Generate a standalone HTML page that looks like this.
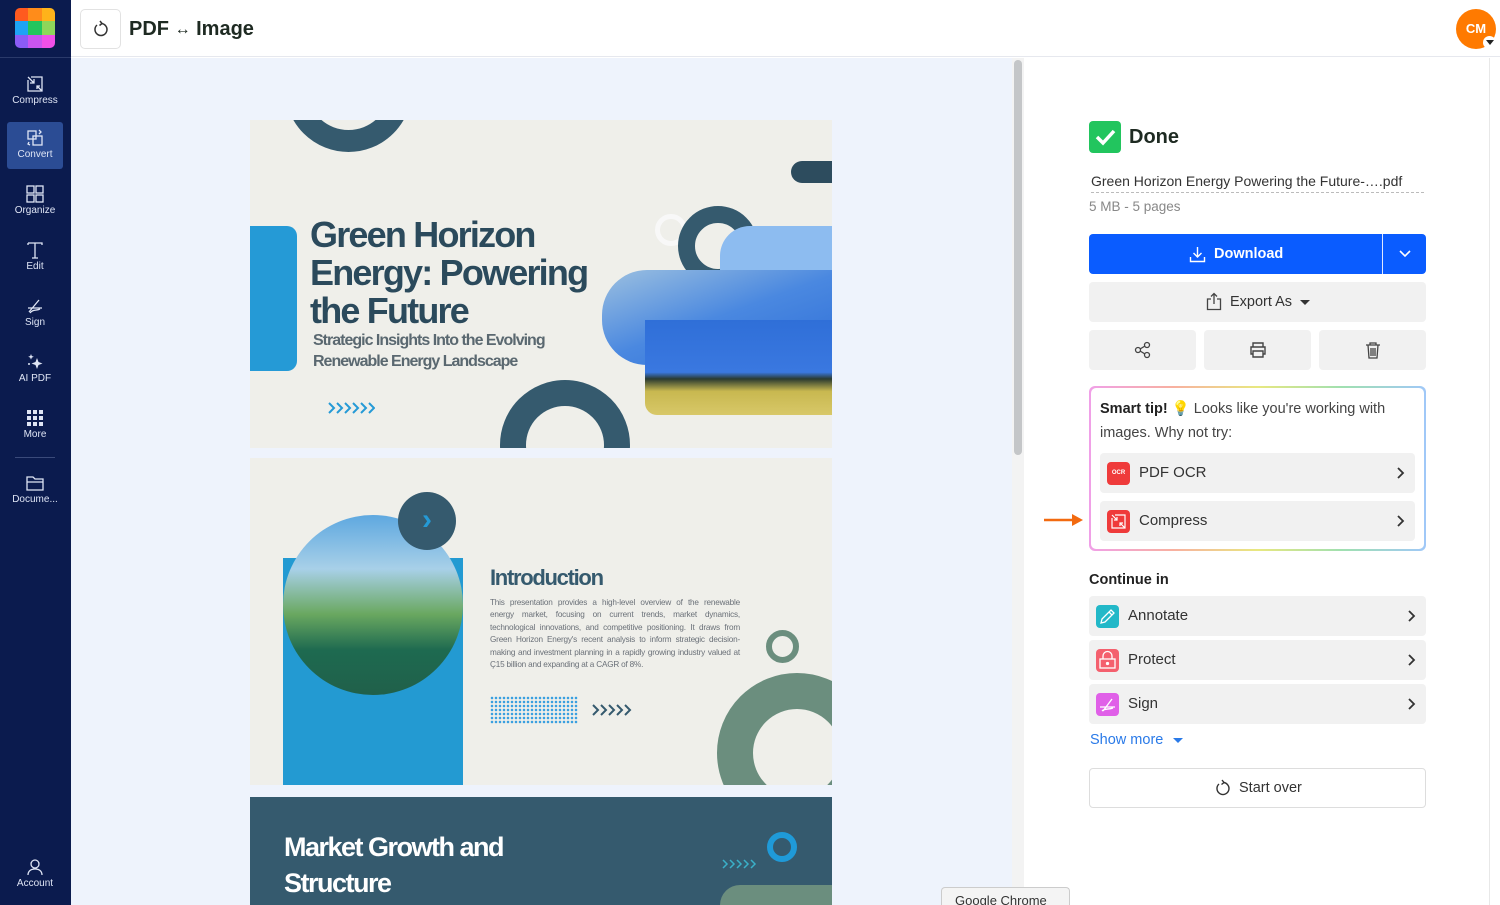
<!DOCTYPE html>
<html><head><meta charset="utf-8"><style>
*{box-sizing:border-box;margin:0;padding:0}
html,body{width:1500px;height:905px;overflow:hidden}
body{font-family:"Liberation Sans",sans-serif;background:#fff;position:relative}
.abs{position:absolute}
#side{left:0;top:0;width:71px;height:905px;background:#0b1b4e}
.nav{position:absolute;left:7px;width:56px;height:48px;color:#dfe5f5;font-size:10px;text-align:center}
.nav svg{display:block;margin:6px auto 1px}
#hdr{left:71px;top:0;width:1429px;height:57px;background:#fff;border-bottom:1px solid #e6e8ee}
#main{left:71px;top:58px;width:941px;height:847px;background:#eef3fc;overflow:hidden}
.slide{position:absolute;left:179px;width:582px;overflow:hidden;background:#efefea}
#rp{left:1024px;top:58px;width:466px;height:847px;background:#fff;border-right:1px solid #e8e8e8}
.btn{position:absolute;background:#f1f1f1;border-radius:4px}
.row{position:absolute;left:1089px;width:337px;height:40px;background:#f1f1f1;border-radius:4px;font-size:15px;color:#333}
.row .ic{position:absolute;left:7px;top:9px;width:23px;height:23px;border-radius:4px}
.row .t{position:absolute;left:39px;top:11px}
.row .ch{position:absolute;right:10px;top:13px}
</style></head><body>
<div id="side" class="abs">
 <div class="abs" style="left:15px;top:8px;width:40px;height:40px;border-radius:5px;overflow:hidden;display:grid;grid-template-columns:1fr 1fr 1fr">
  <div style="background:#ff5a1f"></div><div style="background:#ff8c1a"></div><div style="background:#ffb31a"></div>
  <div style="background:#1ea3f5"></div><div style="background:#22c55e"></div><div style="background:#8ed65a"></div>
  <div style="background:#8b5cf6"></div><div style="background:#c855f0"></div><div style="background:#f050e8"></div>
 </div>
 <div class="abs" style="left:0;top:57px;width:71px;height:1px;background:#2a3a6a"></div>
 <div class="nav" style="top:68px"><svg width="20" height="20" viewBox="0 0 20 20" fill="none" stroke="#dfe5f5" stroke-width="1.3"><path d="M6 3h11v14H3V6"/><path d="M3 3l6 6M9 5v4H5M17 17l-5-5M12 15v-3h3"/></svg>Compress</div>
 <div class="nav" style="top:122px;background:#2b4c94;border-radius:3px;height:47px"><svg width="20" height="20" viewBox="0 0 20 20" fill="none" stroke="#dfe5f5" stroke-width="1.3"><rect x="3" y="3" width="8" height="8"/><rect x="8" y="8" width="9" height="9"/><path d="M14 2l2 2-2 2M4 14l-1 2 2 1"/></svg>Convert</div>
 <div class="nav" style="top:178px"><svg width="20" height="20" viewBox="0 0 20 20" fill="none" stroke="#dfe5f5" stroke-width="1.3"><rect x="2" y="2" width="7" height="7"/><rect x="11" y="2" width="7" height="7"/><rect x="2" y="11" width="7" height="7"/><rect x="11" y="11" width="7" height="7"/></svg>Organize</div>
 <div class="nav" style="top:234px"><svg width="20" height="20" viewBox="0 0 20 20" fill="none" stroke="#dfe5f5" stroke-width="1.3"><path d="M3 3v2M3 3h14v2M10 3v15M7 18h6"/></svg>Edit</div>
 <div class="nav" style="top:290px"><svg width="20" height="20" viewBox="0 0 20 20" fill="none" stroke="#dfe5f5" stroke-width="1.3"><path d="M4 16l10-12M3 12h14M5 17c3-4 6-2 10-4"/></svg>Sign</div>
 <div class="nav" style="top:346px"><svg width="20" height="20" viewBox="0 0 20 20" fill="#dfe5f5"><path d="M12 6l1.5 4 4 1.5-4 1.5-1.5 4-1.5-4-4-1.5 4-1.5z"/><path d="M6 2l.8 2 2 .8-2 .8L6 7.6l-.8-2-2-.8 2-.8z"/><circle cx="4" cy="12" r="1"/></svg>AI PDF</div>
 <div class="nav" style="top:402px"><svg width="20" height="20" viewBox="0 0 20 20" fill="#dfe5f5"><rect x="2" y="2" width="4" height="4"/><rect x="8" y="2" width="4" height="4"/><rect x="14" y="2" width="4" height="4"/><rect x="2" y="8" width="4" height="4"/><rect x="8" y="8" width="4" height="4"/><rect x="14" y="8" width="4" height="4"/><rect x="2" y="14" width="4" height="4"/><rect x="8" y="14" width="4" height="4"/><rect x="14" y="14" width="4" height="4"/></svg>More</div>
 <div class="abs" style="left:15px;top:457px;width:40px;height:1px;background:#3a4a7a"></div>
 <div class="nav" style="top:467px"><svg width="20" height="20" viewBox="0 0 20 20" fill="none" stroke="#dfe5f5" stroke-width="1.3"><path d="M2 4h6l2 2h8v11H2zM2 9h16"/></svg>Docume...</div>
 <div class="nav" style="top:851px"><svg width="20" height="20" viewBox="0 0 20 20" fill="none" stroke="#dfe5f5" stroke-width="1.3"><circle cx="10" cy="7" r="4"/><path d="M3 18c0-4 3-6 7-6s7 2 7 6"/></svg>Account</div>
</div>
<div id="hdr" class="abs">
 <div class="abs" style="left:9px;top:9px;width:41px;height:40px;border:1px solid #e2e2e2;border-radius:5px"><svg class="abs" style="left:11px;top:10px" width="18" height="18" viewBox="0 0 18 18" fill="none" stroke="#333" stroke-width="1.5"><path d="M5 5a6 6 0 1 0 4-1.5"/><path d="M8 1l2 2.5-2.5 2"/></svg></div>
 <div class="abs" style="left:58px;top:18px;font-size:20px;font-weight:bold;color:#1e2a22">PDF <span style="font-size:16px;font-weight:normal;position:relative;top:-1px">↔</span> Image</div>
 <div class="abs" style="left:1385px;top:9px;width:40px;height:40px;border-radius:50%;background:#ff7a00;color:#fff;font-size:13px;font-weight:bold;text-align:center;line-height:40px">CM</div>
 <div class="abs" style="left:1412px;top:36px;width:13px;height:13px;border-radius:50%;background:#fff"></div>
 <div class="abs" style="left:1415px;top:40px;border-left:4px solid transparent;border-right:4px solid transparent;border-top:5px solid #222"></div>
</div>
<div id="main" class="abs">
 <div class="slide" style="top:62px;height:328px">
  <div class="abs" style="left:35px;top:-95px;width:127px;height:127px;border-radius:50%;border:22px solid #355a6e"></div>
  <div class="abs" style="left:541px;top:41px;width:60px;height:22px;border-radius:11px;background:#2d4c5e"></div>
  <div class="abs" style="left:0;top:106px;width:47px;height:145px;background:#259ad6;border-radius:0 10px 10px 0"></div>
  <div class="abs" style="left:60px;top:96px;font-size:36px;font-weight:bold;color:#2b4a5c;line-height:38px;letter-spacing:-1.8px">Green Horizon<br>Energy: Powering<br>the Future</div>
  <div class="abs" style="left:63px;top:210px;font-size:16px;font-weight:bold;color:#5a6870;line-height:21px;letter-spacing:-1px">Strategic Insights Into the Evolving<br>Renewable Energy Landscape</div>
  <svg class="abs" style="left:77px;top:281px" width="48" height="14" viewBox="0 0 48 14" fill="none" stroke="#259ad6" stroke-width="2"><path d="M2 2l5 5-5 5M10 2l5 5-5 5M18 2l5 5-5 5M26 2l5 5-5 5M34 2l5 5-5 5M42 2l5 5-5 5"/></svg>
  <div class="abs" style="left:405px;top:94px;width:32px;height:32px;border-radius:50%;border:5px solid #f8f8f8"></div>
  <div class="abs" style="left:428px;top:86px;width:80px;height:80px;border-radius:50%;border:17px solid #355a6e"></div>
  <div class="abs" style="left:250px;top:260px;width:130px;height:130px;border-radius:50%;border:26px solid #355a6e"></div>
  <div class="abs" style="left:470px;top:106px;width:112px;height:60px;background:#8dbcf0;border-radius:30px 0 0 0"></div>
  <div class="abs" style="left:352px;top:150px;width:230px;height:95px;background:linear-gradient(160deg,#9cc0e0 0%,#4a88e0 50%,#2f6fd8 100%);border-radius:45px 0 0 45px"></div>
  <div class="abs" style="left:395px;top:200px;width:187px;height:95px;background:linear-gradient(180deg,#2f6fd8 0%,#3a78e0 55%,#2a3a30 62%,#c8b850 75%,#d8c868 100%);border-radius:0 0 0 12px"></div>
 </div>
 <div class="slide" style="top:400px;height:327px">
  <div class="abs" style="left:33px;top:100px;width:180px;height:227px;background:#239ad2"></div>
  <div class="abs" style="left:33px;top:57px;width:180px;height:180px;border-radius:50%;background:linear-gradient(180deg,#5ea8e0 0%,#a8d0e8 30%,#6aa860 55%,#1e6a50 75%,#20604a 100%)"></div>
  <div class="abs" style="left:148px;top:34px;width:58px;height:58px;border-radius:50%;background:#355a6e;color:#259ad6;font-size:30px;font-weight:bold;text-align:center;line-height:56px">›</div>
  <div class="abs" style="left:240px;top:107px;font-size:22px;font-weight:bold;color:#355a6e;letter-spacing:-1.3px">Introduction</div>
  <div class="abs" style="left:240px;top:139px;width:250px;font-size:8.2px;line-height:12.4px;color:#6a7078;text-align:justify;letter-spacing:-0.2px">This presentation provides a high-level overview of the renewable energy market, focusing on current trends, market dynamics, technological innovations, and competitive positioning. It draws from Green Horizon Energy's recent analysis to inform strategic decision-making and investment planning in a rapidly growing industry valued at Ç15 billion and expanding at a CAGR of 8%.</div>
  <div class="abs" style="left:240px;top:238px;width:88px;height:28px;background-image:radial-gradient(circle,#3aa0e0 1.2px,transparent 1.4px);background-size:4px 4px"></div>
  <svg class="abs" style="left:341px;top:245px" width="48" height="14" viewBox="0 0 48 14" fill="none" stroke="#355a6e" stroke-width="2"><path d="M2 2l5 5-5 5M10 2l5 5-5 5M18 2l5 5-5 5M26 2l5 5-5 5M34 2l5 5-5 5"/></svg>
  <div class="abs" style="left:516px;top:172px;width:33px;height:33px;border-radius:50%;border:6px solid #6b8e7e"></div>
  <div class="abs" style="left:467px;top:215px;width:160px;height:160px;border-radius:50%;border:36px solid #6b8e7e"></div>
 </div>
 <div class="slide" style="top:739px;height:120px;background:#355a6e">
  <div class="abs" style="left:34px;top:32px;font-size:27px;font-weight:bold;color:#fff;line-height:36px;letter-spacing:-1.5px">Market Growth and<br>Structure</div>
  <div class="abs" style="left:517px;top:35px;width:30px;height:30px;border-radius:50%;border:6px solid #1f9ad8"></div>
  <svg class="abs" style="left:471px;top:61px" width="40" height="12" viewBox="0 0 40 12" fill="none" stroke="#3ab0c8" stroke-width="1.5"><path d="M2 2l4 4-4 4M9 2l4 4-4 4M16 2l4 4-4 4M23 2l4 4-4 4M30 2l4 4-4 4"/></svg>
  <div class="abs" style="left:470px;top:88px;width:140px;height:60px;border-radius:20px;background:#6b8e7e"></div>
 </div>
</div>
<div class="abs" style="left:1012px;top:58px;width:12px;height:847px;background:#f3f3f3"></div>
<div class="abs" style="left:1014px;top:60px;width:8px;height:395px;background:#c4c6c8;border-radius:4px"></div>
<div id="rp" class="abs"></div>
<div class="abs" style="left:1089px;top:121px;width:32px;height:32px;border-radius:4px;background:#22c55e"><svg width="32" height="32" viewBox="0 0 32 32"><path d="M8 16l6 6 11-12" fill="none" stroke="#fff" stroke-width="3.5"/></svg></div>
<div class="abs" style="left:1129px;top:126px;font-size:20px;font-weight:bold;color:#1e2a22">Done</div>
<div class="abs" style="left:1091px;top:173px;font-size:14px;color:#333;width:333px;border-bottom:1px dashed #bbb;padding-bottom:3px">Green Horizon Energy Powering the Future-….pdf</div>
<div class="abs" style="left:1089px;top:199px;font-size:13.5px;color:#888">5 MB - 5 pages</div>
<div class="abs" style="left:1089px;top:234px;width:337px;height:40px;background:#0a5cff;border-radius:4px"></div>
<div class="abs" style="left:1382px;top:234px;width:1px;height:40px;background:#e0e8ff"></div>
<svg class="abs" style="left:1189px;top:245px" width="17" height="18" viewBox="0 0 17 18" fill="none" stroke="#fff" stroke-width="1.4"><path d="M8.5 2v10M4.5 8l4 4 4-4M1.5 12v4.5h14V12"/></svg>
<div class="abs" style="left:1214px;top:246px;font-size:14.5px;font-weight:bold;color:#fff">Download</div>
<svg class="abs" style="left:1398px;top:249px" width="14" height="10" viewBox="0 0 14 10" fill="none" stroke="#fff" stroke-width="1.6"><path d="M2 2l5 5 5-5"/></svg>
<div class="btn" style="left:1089px;top:282px;width:337px;height:40px"></div>
<svg class="abs" style="left:1206px;top:292px" width="16" height="19" viewBox="0 0 16 19" fill="none" stroke="#444" stroke-width="1.3"><path d="M5 7H1.5v10.5h13V7H11M8 12V1.5M5 4.5l3-3 3 3"/></svg>
<div class="abs" style="left:1230px;top:294px;font-size:14.5px;color:#333">Export As</div>
<div class="abs" style="left:1300px;top:300px;border-left:5px solid transparent;border-right:5px solid transparent;border-top:5px solid #333"></div>
<div class="btn" style="left:1089px;top:330px;width:107px;height:40px"></div>
<div class="btn" style="left:1204px;top:330px;width:107px;height:40px"></div>
<div class="btn" style="left:1319px;top:330px;width:107px;height:40px"></div>
<svg class="abs" style="left:1134px;top:341px" width="18" height="18" viewBox="0 0 18 18" fill="none" stroke="#444" stroke-width="1.3"><circle cx="4" cy="9" r="2.5"/><circle cx="13" cy="4" r="2.5"/><circle cx="13" cy="14" r="2.5"/><path d="M6 8l5-3M6 10l5 3"/></svg>
<svg class="abs" style="left:1249px;top:341px" width="18" height="18" viewBox="0 0 18 18" fill="none" stroke="#444" stroke-width="1.4"><path d="M4 6V2h10v4M4 13H2V6h14v7h-2M4 10h10v6H4z"/></svg>
<svg class="abs" style="left:1365px;top:341px" width="16" height="18" viewBox="0 0 16 18" fill="none" stroke="#444" stroke-width="1.3"><path d="M1 4h14M5 4V2h6v2M3 4l1 13h8l1-13M6 7v8M8 7v8M10 7v8"/></svg>
<div class="abs" style="left:1089px;top:386px;width:337px;height:165px;border-radius:6px;padding:2px;background:linear-gradient(90deg,#f0a0e8,#f8b0a0,#e8e880,#a0e0b0,#a0c8f8)"><div style="width:100%;height:100%;background:#fff;border-radius:5px"></div></div>
<div class="abs" style="left:1100px;top:397px;width:315px;font-size:14.5px;line-height:24px;color:#444"><b style="color:#222">Smart tip!</b> <span style="color:#f5d060">💡</span> Looks like you're working with images. Why not try:</div>
<div class="row" style="left:1100px;top:453px;width:315px"><div class="ic" style="background:#ef3b3b;color:#fff;font-size:6px;text-align:center;line-height:23px;font-weight:bold">OCR</div><div class="t" style="left:39px">PDF OCR</div><svg class="ch" width="9" height="14" viewBox="0 0 9 14" fill="none" stroke="#333" stroke-width="1.8"><path d="M2 2l5 5-5 5"/></svg></div>
<div class="row" style="left:1100px;top:501px;width:315px"><div class="ic" style="background:#ef3b3b"><svg width="23" height="23" viewBox="0 0 23 23" fill="none" stroke="#fff" stroke-width="1.2"><path d="M8 5h10v13H5V8"/><path d="M5 5l5 5M10 7v3H7M18 18l-5-5M13 16v-3h3"/></svg></div><div class="t">Compress</div><svg class="ch" width="9" height="14" viewBox="0 0 9 14" fill="none" stroke="#333" stroke-width="1.8"><path d="M2 2l5 5-5 5"/></svg></div>
<svg class="abs" style="left:1044px;top:513px" width="40" height="14" viewBox="0 0 40 14"><path d="M0 7h30" stroke="#f26a10" stroke-width="2.5"/><path d="M28 1l11 6-11 6z" fill="#f26a10"/></svg>
<div class="abs" style="left:1089px;top:572px;font-size:14.5px;font-weight:bold;color:#222">Continue in</div>
<div class="row" style="top:596px"><div class="ic" style="background:#22b8c8"><svg width="23" height="23" viewBox="0 0 23 23" fill="none" stroke="#fff" stroke-width="1.3"><path d="M5 18l1-4 9-9 3 3-9 9zM13 7l3 3"/></svg></div><div class="t">Annotate</div><svg class="ch" width="9" height="14" viewBox="0 0 9 14" fill="none" stroke="#333" stroke-width="1.8"><path d="M2 2l5 5-5 5"/></svg></div>
<div class="row" style="top:640px"><div class="ic" style="background:#f4606e"><svg width="23" height="23" viewBox="0 0 23 23" fill="none" stroke="#fff" stroke-width="1.3"><rect x="4" y="10" width="15" height="9"/><path d="M7 10V7a4.5 4.5 0 0 1 9 0v3"/><circle cx="11.5" cy="14.5" r="1" fill="#fff"/></svg></div><div class="t">Protect</div><svg class="ch" width="9" height="14" viewBox="0 0 9 14" fill="none" stroke="#333" stroke-width="1.8"><path d="M2 2l5 5-5 5"/></svg></div>
<div class="row" style="top:684px"><div class="ic" style="background:#e060e8"><svg width="23" height="23" viewBox="0 0 23 23" fill="none" stroke="#fff" stroke-width="1.3"><path d="M7 18l9-12M4 14h15M6 18c3-3 6-1 11-3"/></svg></div><div class="t">Sign</div><svg class="ch" width="9" height="14" viewBox="0 0 9 14" fill="none" stroke="#333" stroke-width="1.8"><path d="M2 2l5 5-5 5"/></svg></div>
<div class="abs" style="left:1090px;top:732px;font-size:14.5px;color:#2a7ae8">Show more</div>
<div class="abs" style="left:1173px;top:738px;border-left:5px solid transparent;border-right:5px solid transparent;border-top:5px solid #2a7ae8"></div>
<div class="abs" style="left:1089px;top:768px;width:337px;height:40px;border:1px solid #ddd;border-radius:4px"></div>
<svg class="abs" style="left:1214px;top:779px" width="18" height="18" viewBox="0 0 18 18" fill="none" stroke="#333" stroke-width="1.4"><path d="M5 5a6 6 0 1 0 4-1.5"/><path d="M8 1l2 2.5-2.5 2"/></svg>
<div class="abs" style="left:1239px;top:780px;font-size:14.5px;color:#333">Start over</div>
<div class="abs" style="left:941px;top:887px;width:129px;height:18px;overflow:hidden;background:#f4f4f4;border:1px solid #ccc;border-bottom:none;border-radius:4px 4px 0 0;font-size:13px;color:#333;padding:6px 0 0 13px;line-height:14px">Google Chrome</div>
</body></html>
